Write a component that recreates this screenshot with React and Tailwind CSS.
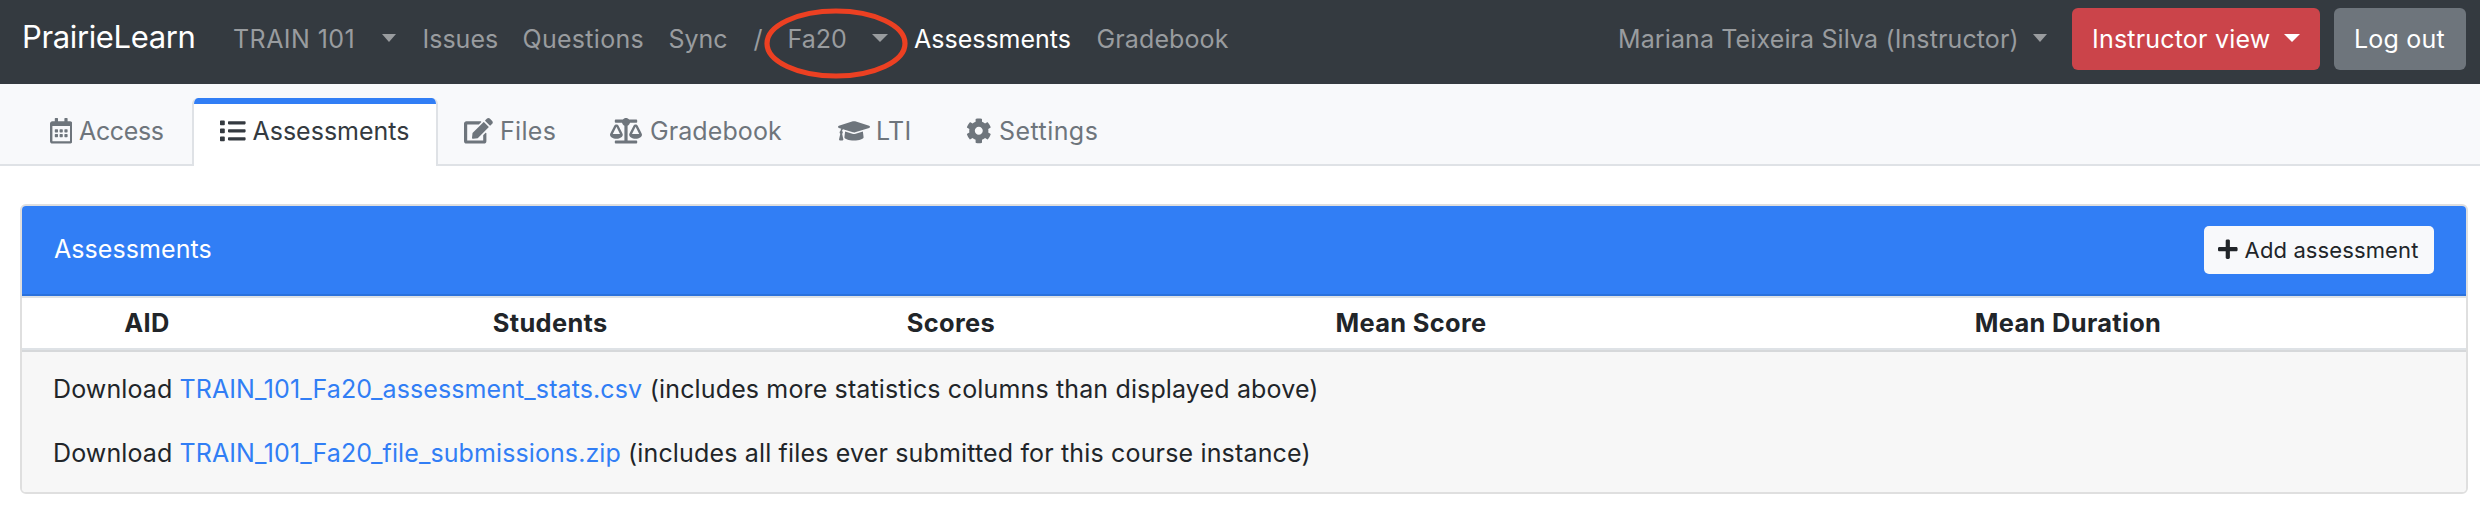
import { FaRegCalendarAlt, FaList, FaEdit, FaBalanceScale, FaGraduationCap, FaCog, FaPlus } from 'react-icons/fa';

function Caret({ className = 'w-4' }) {
  return (
    <svg viewBox="0 0 16 8" preserveAspectRatio="none" className={`-mt-0.5 h-2 shrink-0 fill-current ${className}`} aria-hidden="true">
      <path d="M0 0h16L8 8z" />
    </svg>
  );
}

function Navbar() {
  return (
    <nav className="flex h-[84px] items-start bg-[#343a40] pt-2 pr-[14px] pl-[22px] text-[#999c9f]">
      <div className="flex h-[62px] items-center whitespace-nowrap">
        <a className="w-[211px] pb-1 text-[31px] leading-[38px] tracking-[-0.37px] text-white">PrairieLearn</a>
        <a className="w-[149px] tracking-[0.45px]">TRAIN 101</a>
        <a className="flex w-[40.5px] items-center">
          <Caret className="w-[14px]" />
        </a>
        <a className="w-[100px]">Issues</a>
        <a className="w-[146px] tracking-[0.3px]">Questions</a>
        <a className="w-[85px]">Sync</a>
        <span className="w-[34px]">/</span>
        <div className="relative flex w-[126.5px] items-center">
          <a className="w-[84.5px]">Fa20</a>
          <Caret />
          <svg
            viewBox="0 0 144 71"
            className="pointer-events-none absolute -top-[12.5px] -left-[23.5px] h-[71px] w-[144px]"
            aria-hidden="true"
          >
            <ellipse cx="72" cy="35.5" rx="69" ry="32.5" fill="none" stroke="#ec4022" strokeWidth="5.2" />
          </svg>
        </div>
        <a className="w-[182.5px] text-white">Assessments</a>
        <a className="tracking-[0.12px]">Gradebook</a>
      </div>
      <div className="ml-auto flex h-[62px] items-center whitespace-nowrap">
        <a className="flex w-[454px] items-center tracking-[0.12px]">
          <span className="w-[414.5px]">Mariana Teixeira Silva (Instructor)</span>
          <Caret className="w-[14px]" />
        </a>
        <button className="flex h-[62px] w-[248px] items-center rounded-[6px] bg-[#cb444a] pl-5 text-left tracking-[0.2px] text-white">
          <span className="w-[192px]">Instructor view</span>
          <Caret />
        </button>
        <button className="ml-[14px] h-[62px] w-[132px] rounded-[6px] bg-[#6e757c] pl-5 text-left tracking-[0.21px] text-white">
          Log out
        </button>
      </div>
    </nav>
  );
}

function Tabs() {
  return (
    <div className="flex h-[82px] border-b-2 border-[#dfe2e6] bg-[#f8f9fb] pt-[14px] pl-[50px] whitespace-nowrap text-[#6e757c]">
      <a className="flex h-[66px] w-[142px] items-center">
        <FaRegCalendarAlt className="mr-[6.6px] h-[25.6px] w-[22.4px]" />
        <span className="tracking-[-0.35px]">Access</span>
      </a>
      <a className="flex h-[68px] w-[246px] flex-col overflow-hidden rounded-t-[6px] border-x-2 border-[#dfe2e6] bg-white text-[#343a40]">
        <span className="h-[6px] w-full shrink-0 bg-[#317ef5]" />
        <span className="flex h-[54px] items-center pl-[26px]">
          <FaList className="mr-[6.9px] h-[25.6px] w-[25.6px]" />
          Assessments
        </span>
      </a>
      <div className="flex h-[66px] items-center pl-[26px]">
        <a className="flex w-[146px] items-center">
          <FaEdit className="mr-[7.2px] h-[25.6px] w-[28.8px]" />
          <span className="tracking-[0.3px]">Files</span>
        </a>
        <a className="flex w-[228px] items-center">
          <FaBalanceScale className="mr-2 h-[25.6px] w-8" />
          <span className="tracking-[0.09px]">Gradebook</span>
        </a>
        <a className="flex w-[128px] items-center">
          <FaGraduationCap className="mr-[6px] h-[25.6px] w-8" />
          <span className="tracking-[0.3px]">LTI</span>
        </a>
        <a className="flex items-center">
          <FaCog className="mr-[7.4px] h-[25.6px] w-[25.6px]" />
          <span className="tracking-[0.45px]">Settings</span>
        </a>
      </div>
    </div>
  );
}

function AssessmentsCard() {
  return (
    <section className="mx-5 mt-[38px] mr-3 overflow-hidden rounded-[6px] border-2 border-[#dfdfdf]">
      <header className="flex h-[90px] items-center justify-between border-b-2 border-[#2a71dc] bg-[#317ef5] pr-[32px] pl-[32px] text-white">
        <h2 className="pb-[2px] tracking-[0.07px]">Assessments</h2>
        <button className="flex h-12 w-[230px] items-center rounded-[5px] bg-[#f8f9fb] pl-[14px] text-[22px] tracking-[0.12px] whitespace-nowrap text-[#212529]">
          <FaPlus className="-mt-[2px] mr-[7px] h-[22.4px] w-[19.6px]" />
          Add assessment
        </button>
      </header>
      <table className="w-full table-fixed border-separate border-spacing-0 border-y-2 border-[#dee2e6]">
        <colgroup>
          <col className="w-[250px]" />
          <col className="w-[556.5px]" />
          <col className="w-[245px]" />
          <col className="w-[675px]" />
          <col className="w-[639px]" />
          <col />
        </colgroup>
        <thead>
          <tr className="h-[50px] text-[25.4px] tracking-[0.35px]">
            <th className="p-0">AID</th>
            <th className="p-0">Students</th>
            <th className="p-0">Scores</th>
            <th className="p-0">Mean Score</th>
            <th className="p-0">Mean Duration</th>
            <th className="p-0" />
          </tr>
        </thead>
      </table>
      <footer className="flex h-[142px] flex-col gap-[26px] border-t-2 border-[#d6d8da] bg-[#f7f7f7] pt-[18px] pl-[31px] tracking-[0.12px] whitespace-nowrap">
        <p className="flex">
          <span className="w-[126.5px]">Download</span>
          <a className="w-[470.3px] tracking-[0.1px] text-[#317ef5]">TRAIN_101_Fa20_assessment_stats.csv</a>
          <span className="tracking-[0.14px]">(includes more statistics columns than displayed above)</span>
        </p>
        <p className="flex">
          <span className="w-[126.5px]">Download</span>
          <a className="w-[448.5px] tracking-[0.1px] text-[#317ef5]">TRAIN_101_Fa20_file_submissions.zip</a>
          <span className="tracking-[0.16px]">(includes all files ever submitted for this course instance)</span>
        </p>
      </footer>
    </section>
  );
}

export default function App() {
  return (
    <div className="min-h-[514px] bg-white font-['Inter','Noto_Sans',sans-serif] text-[25px] leading-[38px] text-[#212529]">
      <Navbar />
      <Tabs />
      <AssessmentsCard />
    </div>
  );
}
